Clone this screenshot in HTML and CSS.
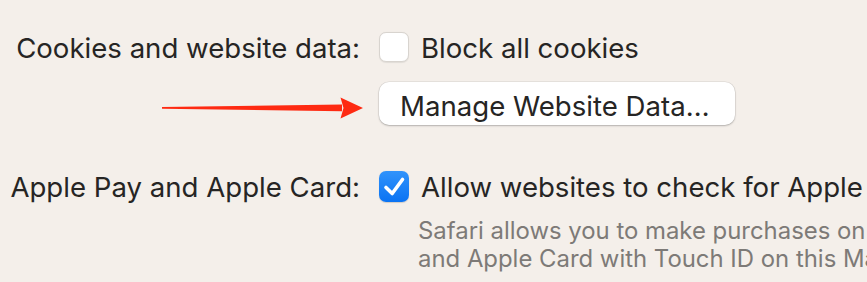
FILE: index.html
```html
<!DOCTYPE html>
<html lang="en">
<head>
<meta charset="utf-8">
<title>Privacy</title>
<link rel="stylesheet" href="styles.css">
</head>
<body>
<div class="prefs">
  <div class="row row-cookies">
    <div class="label">Cookies and website data:</div>
    <div class="control">
      <label class="check-line">
        <span class="checkbox"></span>
        <span class="check-text">Block all cookies</span>
      </label>
    </div>
  </div>
  <div class="row row-button">
    <div class="label"></div>
    <div class="control">
      <button class="push-button">Manage Website Data…</button>
    </div>
  </div>
  <div class="row row-pay">
    <div class="label">Apple Pay and Apple Card:</div>
    <div class="control">
      <label class="check-line">
        <span class="checkbox checked">
          <svg viewBox="0 0 30 31" width="30" height="31"><path d="M7 16.5 L13.2 22.5 L23.5 8.5" fill="none" stroke="#fff" stroke-width="3.6" stroke-linecap="round" stroke-linejoin="round"/></svg>
        </span>
        <span class="check-text">Allow websites to check for Apple Pay and Apple Card</span>
      </label>
      <p class="note">Safari allows you to make purchases on the web using Apple Pay<br>and Apple Card with Touch ID on this Mac.</p>
    </div>
  </div>
  <svg class="arrow" width="867" height="282" viewBox="0 0 867 282">
    <polygon points="162,106.9 342,104.6 342,111.2 162,108.7" fill="#fe2a12"/>
    <polygon points="340.5,97.5 363,108 340.5,118.5 343.5,108" fill="#fe2a12"/>
  </svg>
</div>
</body>
</html>
```
FILE: styles.css
```css
html, body {
  margin: 0;
  padding: 0;
  width: 867px;
  height: 282px;
  overflow: hidden;
  background: #f4efea;
}

.prefs {
  position: relative;
  padding-top: 31px;
  font-family: "Inter", "Noto Sans", sans-serif;
  font-size: 27.6px;
  line-height: 34px;
  color: #262524;
  white-space: nowrap;
}

.row {
  display: flex;
  align-items: flex-start;
}

.label {
  flex: 0 0 360px;
  text-align: right;
  margin-right: 19px;
}

.control {
  display: flex;
  flex-direction: column;
}

.row-button {
  margin-top: 17px;
}

.row-pay {
  margin-top: 45px;
}

.check-line {
  display: flex;
  align-items: flex-start;
}

.checkbox {
  box-sizing: border-box;
  width: 30px;
  height: 30px;
  margin-top: 1px;
  margin-right: 12px;
  border-radius: 7px;
  background: #ffffff;
  border: 1px solid #d8d4cf;
  box-shadow: 0 0.5px 1px rgba(0, 0, 0, 0.08);
}

.checkbox.checked {
  height: 31px;
  border: none;
  background: linear-gradient(#3193fb, #0a73f3);
  box-shadow: 0 0.5px 1px rgba(0, 0, 0, 0.15);
}

.checkbox svg {
  display: block;
}

.push-button {
  box-sizing: border-box;
  width: 356px;
  height: 43px;
  padding: 4px 0 0 21px;
  margin: 0;
  text-align: left;
  font: inherit;
  line-height: 34px;
  color: #262524;
  background: #ffffff;
  border: none;
  border-radius: 10px;
  box-shadow: 0 0 0 0.5px rgba(0, 0, 0, 0.1), 0 1px 2px rgba(0, 0, 0, 0.22);
  vertical-align: top;
}

.note {
  margin: 13px 0 0 39px;
  font-size: 23.9px;
  line-height: 28px;
  color: #7d7a77;
}

.arrow {
  position: absolute;
  left: 0;
  top: 0;
  pointer-events: none;
}
```
